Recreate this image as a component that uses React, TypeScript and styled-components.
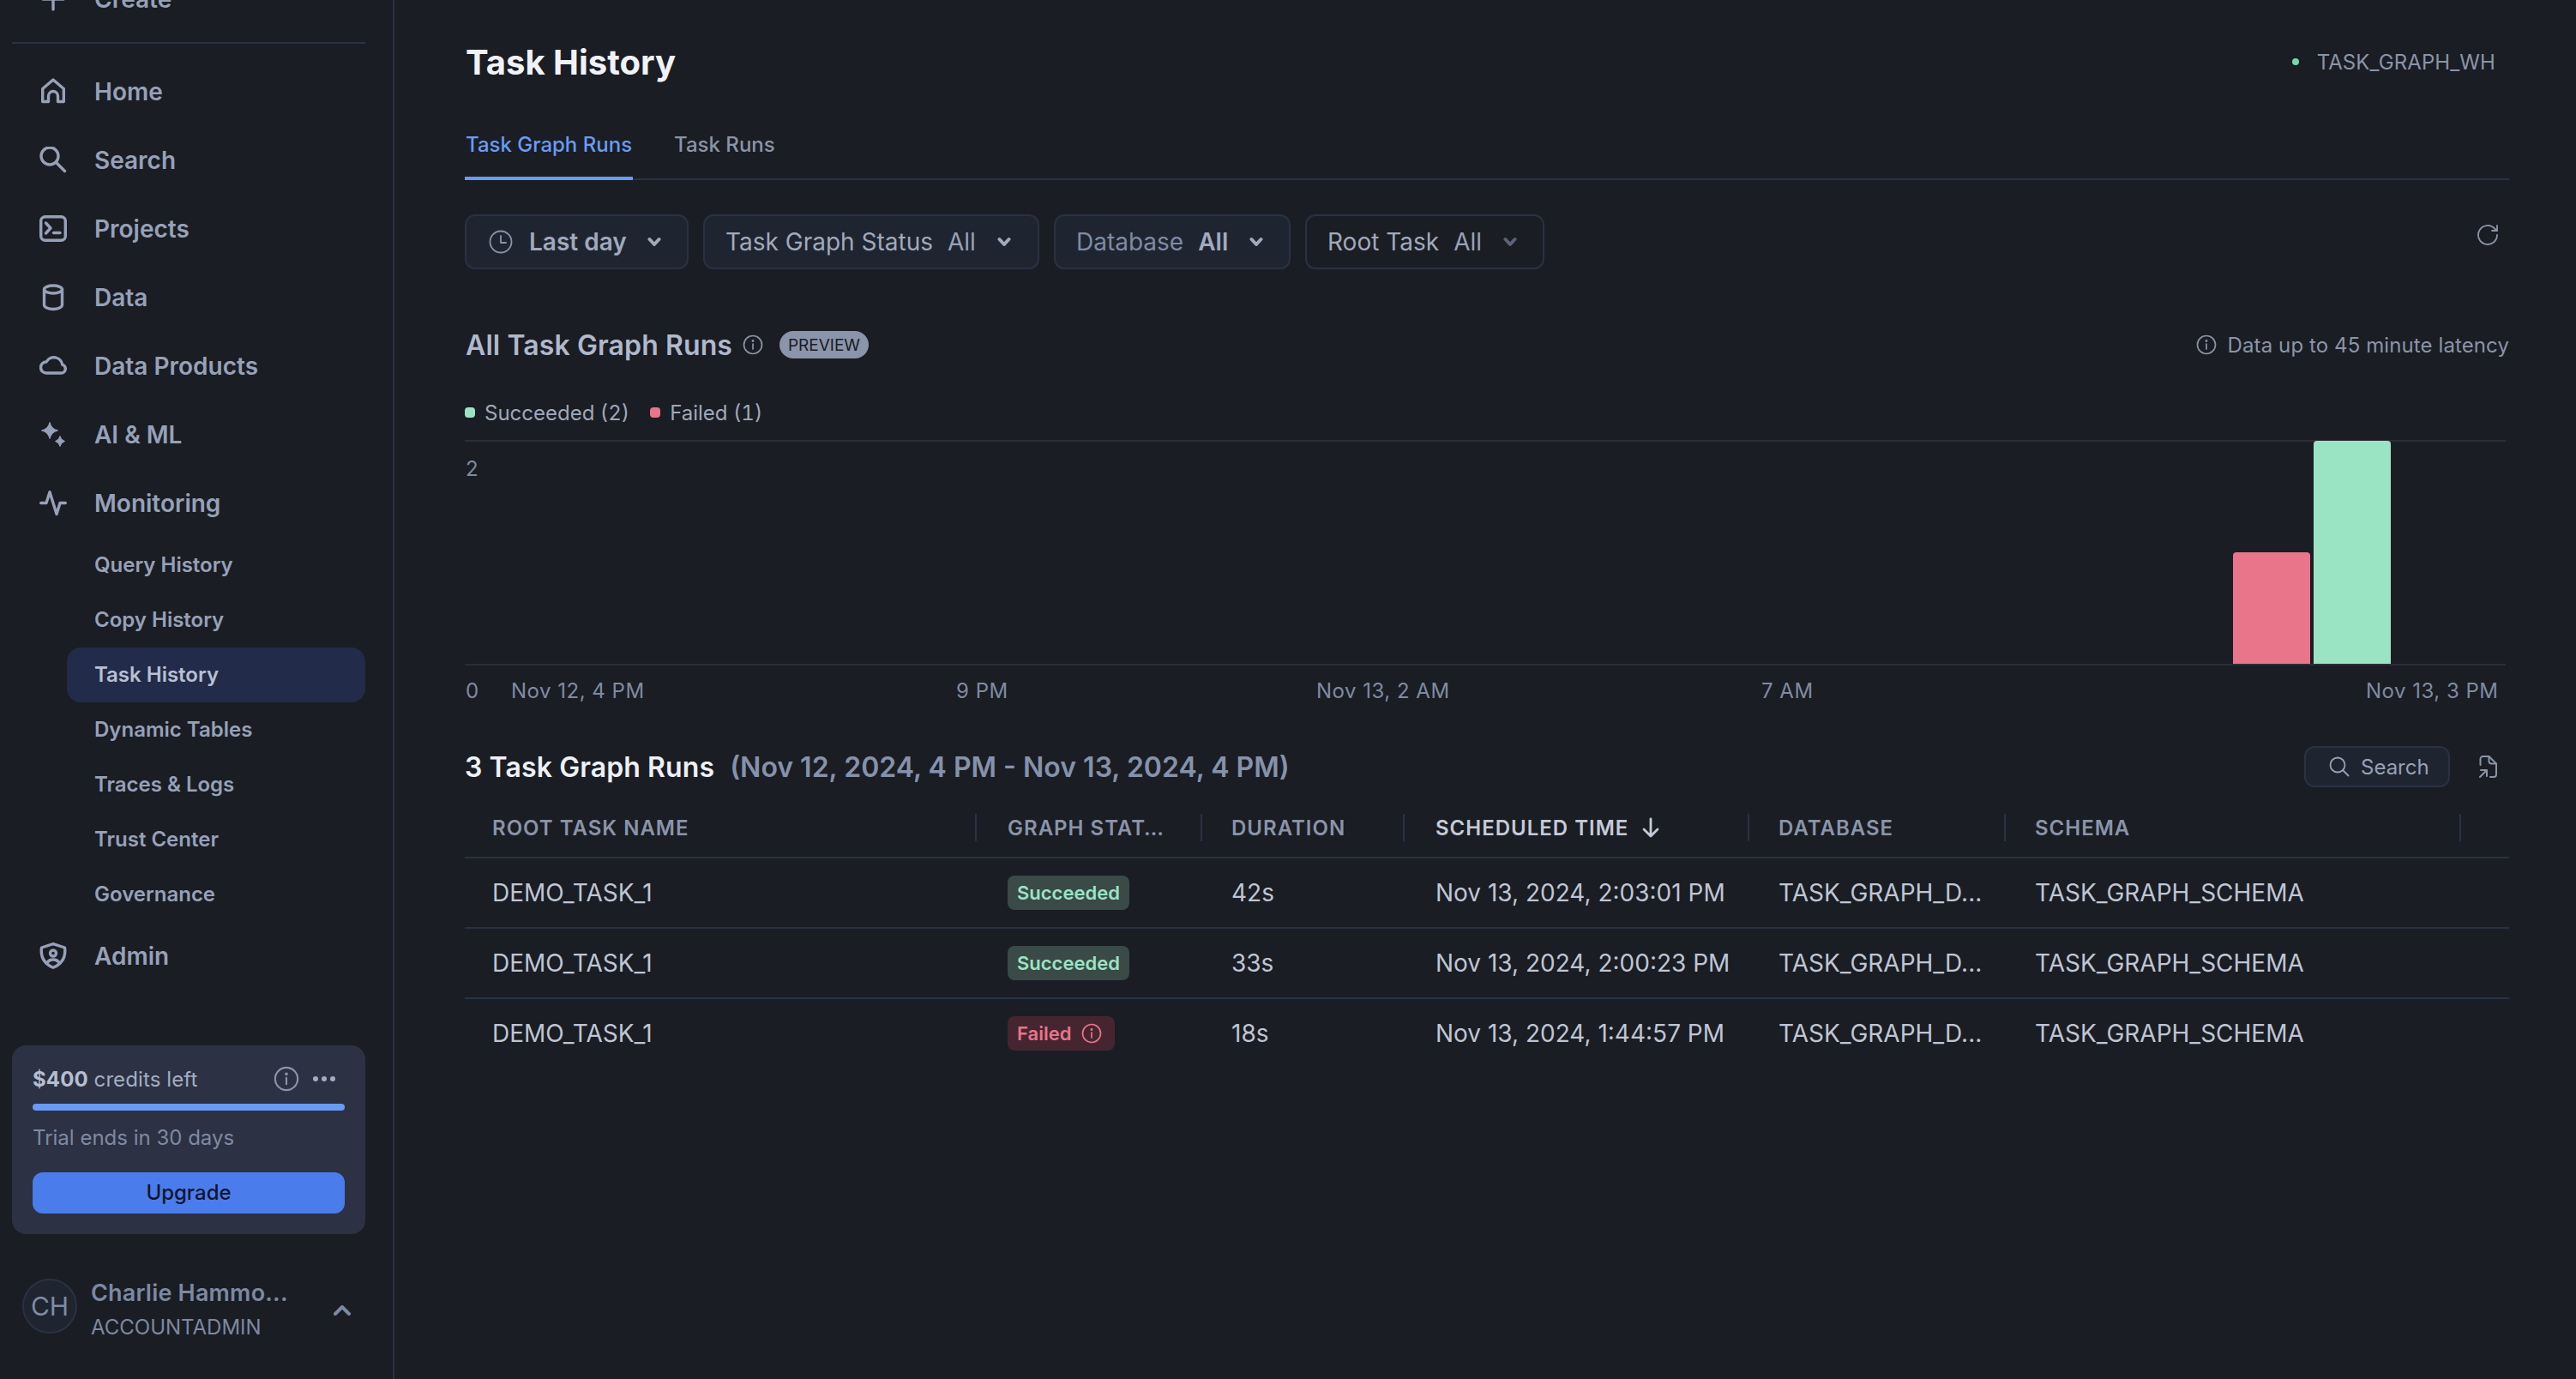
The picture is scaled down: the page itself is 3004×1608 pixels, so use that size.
import React from 'react';
import styled, { createGlobalStyle } from 'styled-components';

const bg = '#1a1d23';
const line = '#2a3145';
const muted = '#8a94a9';

const Global = createGlobalStyle`
  html, body { margin: 0; padding: 0; background: ${bg}; }
  body { font-family: Inter, "Noto Sans", "Liberation Sans", sans-serif; overflow: hidden; }
  * { box-sizing: border-box; }
  svg { display: block; flex: none; }
`;

const Page = styled.div`display: flex; width: 3004px; height: 1608px; overflow: hidden; background: ${bg};`;
const Sidebar = styled.aside`
  width: 460px; height: 1608px; flex: none; overflow: hidden;
  border-right: 2px solid ${line}; padding: 0 32px 0 14px;
  display: flex; flex-direction: column;
`;
const NavRow = styled.div<{ $first?: boolean }>`
  height: 80px; flex: none; display: flex; align-items: center; gap: 32px; padding-left: 32px;
  margin-top: ${p => (p.$first ? '-41px' : '0')};
  font-size: 28px; font-weight: 600; color: #96a1b9;
`;
const SideDivider = styled.div`height: 2px; background: ${line}; margin: 10px 0 16px; flex: none;`;
const SubList = styled.div`margin: 0 0 0 64px; display: flex; flex-direction: column;`;
const SubItem = styled.div<{ $active?: boolean }>`
  height: 64px; display: flex; align-items: center; padding: 0 0 2px 32px; border-radius: 16px;
  font-size: 24px; font-weight: 600;
  color: ${p => (p.$active ? '#b8c0d2' : '#96a1b9')};
  background: ${p => (p.$active ? '#222b49' : 'transparent')};
`;
const CreditCard = styled.div`
  margin-top: 64px; height: 220px; flex: none; background: #2c3244; border-radius: 16px; padding: 24px;
  display: flex; flex-direction: column;
`;
const CreditTop = styled.div`display: flex; align-items: center; height: 30px; gap: 16px; font-size: 24px; letter-spacing: .1px; color: #a3adc2; padding-right: 11px;`;
const CreditLabel = styled.span`margin-right: auto; b { font-weight: 700; color: #b6bed0; }`;
const Progress = styled.div`height: 8px; margin-top: 14px; border-radius: 4px; background: #6a9bf4; flex: none;`;
const Trial = styled.div`height: 32px; line-height: 32px; margin-top: 16px; font-size: 24px; color: #7f8aa2;`;
const Upgrade = styled.div`
  height: 48px; margin-top: 24px; padding-bottom: 2px; border-radius: 12px; background: #4a7deb; color: #0e1530;
  display: flex; align-items: center; justify-content: center; font-size: 24px; font-weight: 500;
`;
const UserRow = styled.div`margin-top: 52px; display: flex; align-items: center; padding-left: 12px;`;
const Avatar = styled.div`
  width: 64px; height: 64px; border-radius: 50%; border: 2px solid #2a3145; background: #1e2530; align-self: flex-start;
  display: flex; align-items: center; justify-content: center; font-size: 30px; color: #7f8ba3; flex: none;
`;
const UserText = styled.div`margin-left: 16px; width: 282px; display: flex; flex-direction: column; gap: 7px;`;
const UserName = styled.div`font-size: 27px; line-height: 34px; font-weight: 600; letter-spacing: .2px; color: #7c89a3; white-space: nowrap;`;
const UserRole = styled.div`font-size: 24px; line-height: 32px; color: #7c89a3;`;

const Main = styled.main`flex: 1; min-width: 0; padding: 0 78px 0 82px; display: flex; flex-direction: column;`;
const Header = styled.header`height: 144px; flex: none; display: flex; align-items: center; justify-content: space-between;`;
const Title = styled.h1`margin: 0 0 0 1px; font-size: 40px; font-weight: 700; color: #f0f2f6;`;
const Warehouse = styled.div`display: flex; align-items: center; gap: 21px; margin-right: 16px; font-size: 24px; letter-spacing: .1px; color: ${muted};`;
const Dot = styled.span`width: 8px; height: 8px; border-radius: 50%; background: #6fdca6;`;
const TabBar = styled.nav`height: 66px; flex: none; display: flex; gap: 47px; box-shadow: inset 0 -2px 0 ${line};`;
const Tab = styled.div<{ $active?: boolean }>`
  height: 66px; padding: 0 1px ${p => (p.$active ? '14px' : '18px')}; display: flex; align-items: center;
  font-size: 24px; font-weight: 500;
  color: ${p => (p.$active ? '#6a9bf4' : muted)};
  border-bottom: ${p => (p.$active ? '4px solid #6a9bf4' : 'none')};
`;
const FilterRow = styled.div`margin-top: 40px; display: flex; gap: 17px; height: 64px; flex: none;`;
const Filter = styled.div<{ $plain?: boolean; $w: number }>`
  height: 64px; width: ${p => p.$w}px; display: flex; align-items: center; padding: 0 0 0 24px; border-radius: 12px;
  border: 2px solid ${line}; background: ${p => (p.$plain ? 'transparent' : '#1e2530')};
  font-size: 28px; color: #a1a9bc; white-space: nowrap;
`;
const ClockSlot = styled.span`margin-left: 2px;`;
const FilterName = styled.span<{ $dim?: boolean }>`color: ${p => (p.$dim ? '#7f8ba3' : '#a1a9bc')};`;
const FilterValue = styled.span<{ $bold?: boolean }>`
  margin-left: 17px; margin-right: 25px; font-weight: ${p => (p.$bold ? 600 : 400)};
  color: ${p => (p.$bold ? '#a1aabf' : '#98a1b5')};
`;
const LastDay = styled.span`margin: 0 24px 0 19px; font-weight: 600; color: #a1a9bc;`;
const Refresh = styled.div`margin: 11px 11px 0 auto; align-self: flex-start;`;
const SectionHead = styled.div`margin-top: 72px; height: 32px; flex: none; display: flex; align-items: center;`;
const SectionTitle = styled.h2`margin: 0 12px 0 1px; font-size: 32px; font-weight: 600; letter-spacing: .1px; color: #b0b8cc; white-space: nowrap;`;
const Pill = styled.span`
  margin-left: 19px; height: 32px; width: 104px; border-radius: 16px; background: #8a94ab; color: #1a1d23;
  display: flex; align-items: center; justify-content: center; font-size: 19px; font-weight: 400;
`;
const Latency = styled.div`margin-left: auto; display: flex; align-items: center; gap: 13px; font-size: 24px; letter-spacing: .1px; color: ${muted};`;
const Legend = styled.div`margin-top: 47px; height: 32px; flex: none; display: flex; align-items: center; font-size: 24px; font-variant-numeric: tabular-nums; color: #a0a8ba;`;
const LegendItem = styled.div`display: flex; align-items: center; gap: 11px; margin-right: 24px;`;
const Swatch = styled.span<{ $c: string }>`width: 12px; height: 12px; border-radius: 4px; background: ${p => p.$c};`;
const ChartBox = styled.div`margin-top: 8px; height: 320px; flex: none;`;
const RunsHead = styled.div`margin-top: 45px; height: 48px; flex: none; display: flex; align-items: center;`;
const RunsTitle = styled.h2`margin: 0; font-size: 32px; font-weight: 600; letter-spacing: .1px; color: #eef0f5; white-space: nowrap;`;
const RunsRange = styled.span`margin-left: 18px; font-size: 32px; font-weight: 600; color: #8592ab; white-space: nowrap;`;
const SearchBtn = styled.div`
  margin-left: auto; width: 170px; height: 48px; border-radius: 12px; border: 2px solid ${line}; background: #1e2530;
  display: flex; align-items: center; gap: 13px; padding-left: 27px; font-size: 24px; color: #98a1b5;
`;
const ExportBtn = styled.div`margin: 0 14px 0 34px;`;
const cols = '601px 261px 238px 400px 299px 533px 1fr';
const HeaderRow = styled.div`
  margin-top: 13px; height: 70px; flex: none; display: grid; grid-template-columns: ${cols};
  align-items: center; border-bottom: 2px solid ${line};
`;
const HeadCell = styled.div<{ $sorted?: boolean }>`
  height: 32px; margin-right: 4px; padding-left: 32px; border-right: 2px solid ${line};
  display: flex; align-items: center; gap: 15px;
  font-size: 24px; font-weight: 600; letter-spacing: 1px; white-space: nowrap;
  color: ${p => (p.$sorted ? '#c5cad8' : muted)};
  &:nth-child(2), &:nth-child(4), &:nth-child(5) { margin-right: 2px; }
`;
const Row = styled.div<{ $last?: boolean }>`
  height: 82px; flex: none; display: grid; grid-template-columns: ${cols}; align-items: center;
  border-bottom: ${p => (p.$last ? 'none' : `2px solid ${line}`)};
  ${p => (p.$last ? 'padding-bottom: 2px;' : '')}
`;
const Cell = styled.div`padding-left: 32px; font-size: 28px; color: #bfc5d4; white-space: nowrap;`;
const Badge = styled.span<{ $failed?: boolean }>`
  display: inline-flex; align-items: center; gap: 12px; height: 40px;
  padding: ${p => (p.$failed ? '0 15px 0 11px' : '0 11px')}; border-radius: 8px;
  font-size: 22px; font-weight: 600;
  background: ${p => (p.$failed ? '#452630' : '#3a4a47')};
  color: ${p => (p.$failed ? '#e8758a' : '#9ae4c4')};
  vertical-align: middle;
`;

const ic = { fill: 'none', stroke: '#96a1b9', strokeWidth: 3.4, strokeLinecap: 'round', strokeLinejoin: 'round' } as const;
const Ico: React.FC<{ children: React.ReactNode }> = ({ children }) => (
  <svg width="32" height="32" viewBox="0 0 32 32" {...ic}>{children}</svg>
);

const Plus = () => <Ico><path d="M16 4v24M4 16h24" /></Ico>;
const Home = () => <Ico><path d="M3.700 27.500V12.500L16 2l12.300 10.500v15H21.500V21a5.500 5.500 0 0 0-11 0v6.500z" /></Ico>;
const SearchI = () => <Ico><circle cx="12" cy="11" r="10" /><path d="M19.500 18.500l10 10" /></Ico>;
const Projects = () => <Ico><rect x="1.700" y="1.700" width="28.600" height="27.600" rx="5" /><path d="M7.500 9l5.500 6-5.500 6" /><path d="M16.500 20.500h7.500" /></Ico>;
const Data = () => <Ico><path d="M5.500 6.500v18c0 2.500 4.700 5 10.500 5s10.500-2.500 10.500-5v-18" /><ellipse cx="16" cy="6.500" rx="10.500" ry="4.500" /></Ico>;
const Cloud = () => <Ico><path d="M8 24h17.500a5 5 0 0 0 1.200-9.800A10 10 0 0 0 8 11a6.500 6.500 0 0 0 0 13z" /></Ico>;
const Sparks = () => (
  <svg width="32" height="32" viewBox="0 0 32 32" fill="#96a1b9" stroke="#96a1b9" strokeWidth="1" strokeLinejoin="round">
    <path d="M12 1.500Q13.800 9.200 21.500 11 13.800 12.800 12 20.500 10.200 12.800 2.500 11 10.200 9.200 12 1.500z" />
    <path d="M24 17.500Q25 22 29.500 23.500 25 25 24 29.500 23 25 18.500 23.500 23 22 24 17.500z" />
  </svg>
);
const Pulse = () => <Ico><path d="M1.700 15.500H8L12 2.700l8 25.800 4-13h6.300" /></Ico>;
const Shield = () => (
  <Ico>
    <path d="M16 1.700 29.500 6c1.200 9-.8 17.800-13.500 23.300C3.300 23.800 1.300 15 2.500 6z" />
    <circle cx="16" cy="12.500" r="3.500" />
    <path d="M8.500 24.500c1.500-3 4-4.500 7.500-4.500s6 1.500 7.500 4.500" />
  </Ico>
);

const Info: React.FC<{ size: number; color?: string }> = ({ size, color = muted }) => (
  <svg width={size} height={size} viewBox="0 0 24 24" fill="none" stroke={color} strokeWidth="1.700" strokeLinecap="round">
    <circle cx="12" cy="12" r="10.500" />
    <path d="M12 11v6" />
    <circle cx="12" cy="7.500" r=".6" fill={color} />
  </svg>
);
const Chevron: React.FC<{ color?: string }> = ({ color = '#a1a9bc' }) => (
  <svg width="16" height="12" viewBox="0 0 16 12" fill="none" stroke={color} strokeWidth="4" strokeLinecap="round" strokeLinejoin="round">
    <path d="M2.500 3l5.500 6 5.500-6" />
  </svg>
);
const Clock = () => (
  <ClockSlot>
    <svg width="28" height="28" viewBox="0 0 28 28" fill="none" stroke={muted} strokeWidth="1.800" strokeLinecap="round" strokeLinejoin="round">
      <circle cx="14" cy="14" r="12.500" /><path d="M14 7v8h6" />
    </svg>
  </ClockSlot>
);

const Chart = () => {
  const t = { fontFamily: 'Inter, sans-serif', fontSize: 24, fill: '#7f8ba3' };
  const x = { ...t, letterSpacing: 0.5 };
  return (
    <svg width="2384" height="320" viewBox="0 0 2384 320">
      <rect x="0" y="8" width="2380" height="2" fill="#2b2e35" />
      <rect x="0" y="269" width="2380" height="2" fill="#2b2e35" />
      <text x="1" y="50" {...t}>2</text>
      <text x="1" y="309" {...t}>0</text>
      <text x="54" y="309" {...x}>Nov 12, 4 PM</text>
      <text x="573" y="309" {...x}>9 PM</text>
      <text x="993" y="309" {...x}>Nov 13, 2 AM</text>
      <text x="1512" y="309" {...x}>7 AM</text>
      <text x="2217" y="309" {...x}>Nov 13, 3 PM</text>
      <path d="M2062 269V143a4 4 0 0 1 4-4h82a4 4 0 0 1 4 4v126z" fill="#e8758a" />
      <path d="M2156 269V13a4 4 0 0 1 4-4h82a4 4 0 0 1 4 4v256z" fill="#9ae4c4" />
    </svg>
  );
};

const rows = [
  { s: 'Succeeded', d: '42s', t: 'Nov 13, 2024, 2:03:01 PM' },
  { s: 'Succeeded', d: '33s', t: 'Nov 13, 2024, 2:00:23 PM' },
  { s: 'Failed', d: '18s', t: 'Nov 13, 2024, 1:44:57 PM' },
];
const subs = ['Query History', 'Copy History', 'Task History', 'Dynamic Tables', 'Traces & Logs', 'Trust Center', 'Governance'];

export default function App() {
  return (
    <Page>
      <Global />
      <Sidebar>
        <NavRow $first><Plus />Create</NavRow>
        <SideDivider />
        <NavRow><Home />Home</NavRow>
        <NavRow><SearchI />Search</NavRow>
        <NavRow><Projects />Projects</NavRow>
        <NavRow><Data />Data</NavRow>
        <NavRow><Cloud />Data Products</NavRow>
        <NavRow><Sparks />AI &amp; ML</NavRow>
        <NavRow><Pulse />Monitoring</NavRow>
        <SubList>
          {subs.map(s => <SubItem key={s} $active={s === 'Task History'}>{s}</SubItem>)}
        </SubList>
        <NavRow><Shield />Admin</NavRow>
        <CreditCard>
          <CreditTop>
            <CreditLabel><b>$400</b> credits left</CreditLabel>
            <Info size={30} />
            <svg width="26" height="8" viewBox="0 0 26 8" fill="#a3adc2"><circle cx="3" cy="4" r="3" /><circle cx="13" cy="4" r="3" /><circle cx="23" cy="4" r="3" /></svg>
          </CreditTop>
          <Progress />
          <Trial>Trial ends in 30 days</Trial>
          <Upgrade>Upgrade</Upgrade>
        </CreditCard>
        <UserRow>
          <Avatar>CH</Avatar>
          <UserText>
            <UserName>Charlie Hammo...</UserName>
            <UserRole>ACCOUNTADMIN</UserRole>
          </UserText>
          <svg width="22" height="14" viewBox="0 0 22 14" fill="none" stroke="#7c89a3" strokeWidth="4" strokeLinecap="round" strokeLinejoin="round"><path d="M3 11l8-8 8 8" /></svg>
        </UserRow>
      </Sidebar>
      <Main>
        <Header>
          <Title>Task History</Title>
          <Warehouse><Dot />TASK_GRAPH_WH</Warehouse>
        </Header>
        <TabBar>
          <Tab $active>Task Graph Runs</Tab>
          <Tab>Task Runs</Tab>
        </TabBar>
        <FilterRow>
          <Filter $w={261}><Clock /><LastDay>Last day</LastDay><Chevron /></Filter>
          <Filter $w={392}><FilterName>Task Graph Status</FilterName><FilterValue>All</FilterValue><Chevron /></Filter>
          <Filter $w={276}><FilterName $dim>Database</FilterName><FilterValue $bold>All</FilterValue><Chevron /></Filter>
          <Filter $w={279} $plain><FilterName>Root Task</FilterName><FilterValue>All</FilterValue><Chevron color="#5a6478" /></Filter>
          <Refresh>
            <svg width="26" height="26" viewBox="0 0 26 26" fill="none" stroke={muted} strokeWidth="1.800" strokeLinecap="round" strokeLinejoin="round">
              <path d="M23 13a11 11 0 1 1-3.200-7.800L23 8" /><path d="M23 2v6h-6" />
            </svg>
          </Refresh>
        </FilterRow>
        <SectionHead>
          <SectionTitle>All Task Graph Runs</SectionTitle>
          <Info size={24} />
          <Pill>PREVIEW</Pill>
          <Latency><Info size={24} />Data up to 45 minute latency</Latency>
        </SectionHead>
        <Legend>
          <LegendItem><Swatch $c="#9ae4c4" />Succeeded (2)</LegendItem>
          <LegendItem><Swatch $c="#e8758a" />Failed (1)</LegendItem>
        </Legend>
        <ChartBox><Chart /></ChartBox>
        <RunsHead>
          <RunsTitle>3 Task Graph Runs</RunsTitle>
          <RunsRange>(Nov 12, 2024, 4 PM - Nov 13, 2024, 4 PM)</RunsRange>
          <SearchBtn>
            <svg width="24" height="24" viewBox="0 0 24 24" fill="none" stroke="#98a1b5" strokeWidth="1.800" strokeLinecap="round"><circle cx="10" cy="10" r="8.500" /><path d="M16 16l6.500 6.500" /></svg>
            Search
          </SearchBtn>
          <ExportBtn>
            <svg width="21" height="26" viewBox="0 0 21 26" fill="none" stroke={muted} strokeWidth="2" strokeLinecap="round" strokeLinejoin="round">
              <path d="M1.500 11V4a3 3 0 0 1 3-3h7l8.500 8.500V22a3 3 0 0 1-3 3h-4" /><path d="M11.500 1v5.500a3 3 0 0 0 3 3H20" /><path d="M1 25l8-8M2 17h7v7" />
            </svg>
          </ExportBtn>
        </RunsHead>
        <HeaderRow>
          <HeadCell>ROOT TASK NAME</HeadCell>
          <HeadCell>GRAPH STAT…</HeadCell>
          <HeadCell>DURATION</HeadCell>
          <HeadCell $sorted>SCHEDULED TIME
            <svg width="22" height="24" viewBox="0 0 22 24" fill="none" stroke="#c5cad8" strokeWidth="2.800" strokeLinecap="round" strokeLinejoin="round"><path d="M11 2v20M3 14l8 8 8-8" /></svg>
          </HeadCell>
          <HeadCell>DATABASE</HeadCell>
          <HeadCell>SCHEMA</HeadCell>
        </HeaderRow>
        {rows.map((r, i) => (
          <Row key={i} $last={i === 2}>
            <Cell>DEMO_TASK_1</Cell>
            <Cell>
              {r.s === 'Failed'
                ? <Badge $failed>Failed<Info size={24} color="#e8758a" /></Badge>
                : <Badge>Succeeded</Badge>}
            </Cell>
            <Cell>{r.d}</Cell>
            <Cell>{r.t}</Cell>
            <Cell>TASK_GRAPH_D...</Cell>
            <Cell>TASK_GRAPH_SCHEMA</Cell>
          </Row>
        ))}
      </Main>
    </Page>
  );
}
